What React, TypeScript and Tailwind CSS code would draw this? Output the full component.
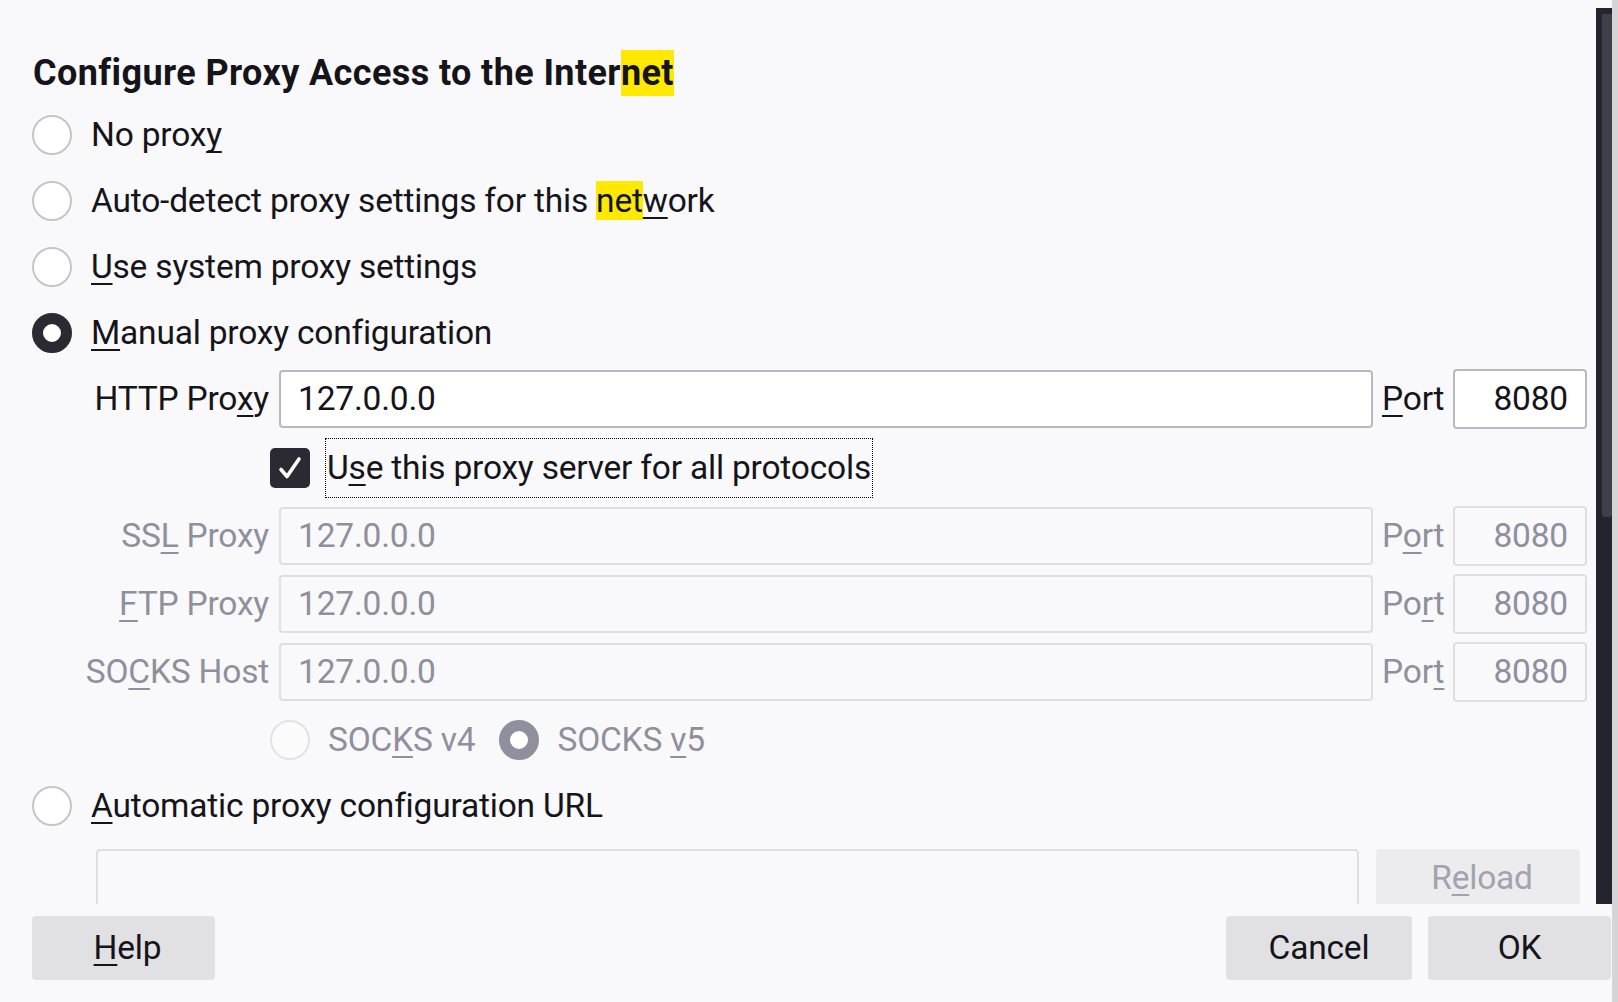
import React from "react";

const font = { fontFamily: "Roboto, 'Noto Sans', sans-serif" };

function Key({ children }: { children: React.ReactNode }) {
  return (
    <span className="underline decoration-[2px] underline-offset-[5px] [text-decoration-skip-ink:none]">
      {children}
    </span>
  );
}

function Radio({ checked, disabled }: { checked?: boolean; disabled?: boolean }) {
  if (checked) {
    return (
      <span
        className={`box-border block h-[40px] w-[40px] shrink-0 rounded-full border-[11px] bg-white ${
          disabled ? "border-[#8f8f9d]" : "border-[#2b2a33]"
        }`}
      />
    );
  }
  return (
    <span
      className={`box-border block h-[40px] w-[40px] shrink-0 rounded-full border-2 ${
        disabled ? "border-[#e3e3e6] bg-[#fbfbfc]" : "border-[#c6c6ca] bg-white"
      }`}
    />
  );
}

function RadioRow({ children, checked }: { children: React.ReactNode; checked?: boolean }) {
  return (
    <div className="flex h-[66px] items-center gap-[19px]">
      <Radio checked={checked} />
      <span className="whitespace-nowrap">{children}</span>
    </div>
  );
}

function ProxyRow({
  label,
  port,
  disabled,
}: {
  label: React.ReactNode;
  port: React.ReactNode;
  disabled?: boolean;
}) {
  const box = disabled
    ? "border-[#dfdfe2] bg-[#f9f9fb] text-[#8f8f9d]"
    : "border-[#b9b9be] bg-white text-[#15141a]";
  return (
    <div className={`flex h-[58px] items-center ${disabled ? "text-[#8f8f9d]" : ""}`}>
      <div className="w-[237px] shrink-0 whitespace-nowrap text-right">{label}</div>
      <div className={`ml-[10px] flex h-[58px] flex-1 items-center rounded-[4px] border-2 pl-[17px] ${box}`}>
        127.0.0.0
      </div>
      <div className="ml-[9px] w-[61px] whitespace-nowrap">{port}</div>
      <div className={`ml-[10px] flex h-[60px] w-[134px] items-center justify-end rounded-[4px] border-2 pr-[17px] ${box}`}>
        8080
      </div>
    </div>
  );
}

export default function App() {
  return (
    <div
      className="flex h-[1002px] w-[1618px] overflow-hidden bg-[#f9f9fb] text-[33.5px] leading-none tracking-[-0.2px] text-[#15141a]"
      style={font}
    >
      <div className="flex min-w-0 flex-1 flex-col">
        {/* scrolling pane */}
        <div className="flex h-[904px] overflow-hidden">
          <div className="min-w-0 flex-1 pl-[32px] pr-[9px] pt-[50px]">
            <div className="flex h-[52px] items-start">
              <h1 className="whitespace-nowrap pl-px text-[36px] font-bold leading-[46px] tracking-[0.4px]">
                Configure Proxy Access to the Inter
                <span className="inline-block bg-[#ffe900]">net</span>
              </h1>
            </div>

            <RadioRow>
              No prox<Key>y</Key>
            </RadioRow>
            <RadioRow>
              Auto-detect proxy settings for this <span className="bg-[#ffe900]">net</span>
              <Key>w</Key>ork
            </RadioRow>
            <RadioRow>
              <Key>U</Key>se system proxy settings
            </RadioRow>
            <RadioRow checked>
              <Key>M</Key>anual proxy configuration
            </RadioRow>

            <div className="mt-[4px]">
              <ProxyRow
                label={
                  <>
                    HTTP Pro<Key>x</Key>y
                  </>
                }
                port={
                  <>
                    <Key>P</Key>ort
                  </>
                }
              />
            </div>

            <div className="mt-[10px] flex h-[60px] items-center pl-[238px]">
              <span className="flex h-[40px] w-[40px] items-center justify-center rounded-[5px] bg-[#2b2a33]">
                <svg width="30" height="30" viewBox="0 0 30 30" fill="none">
                  <path d="M6 16.5 L12 23.5 L24 6" stroke="white" strokeWidth="3.6" strokeLinecap="round" strokeLinejoin="round" />
                </svg>
              </span>
              <span className="ml-[15px] flex h-[60px] items-center border border-dotted border-black px-px whitespace-nowrap">
                U<Key>s</Key>e this proxy server for all protocols
              </span>
            </div>

            <div className="mt-[9px] flex flex-col gap-[10px]">
              <ProxyRow
                disabled
                label={
                  <>
                    SS<Key>L</Key> Proxy
                  </>
                }
                port={
                  <>
                    P<Key>o</Key>rt
                  </>
                }
              />
              <ProxyRow
                disabled
                label={
                  <>
                    <Key>F</Key>TP Proxy
                  </>
                }
                port={
                  <>
                    Po<Key>r</Key>t
                  </>
                }
              />
              <ProxyRow
                disabled
                label={
                  <>
                    SO<Key>C</Key>KS Host
                  </>
                }
                port={
                  <>
                    Por<Key>t</Key>
                  </>
                }
              />
            </div>

            <div className="mt-[10px] flex h-[58px] items-center pl-[238px] text-[#8f8f9d]">
              <Radio disabled />
              <span className="ml-[18px] whitespace-nowrap">
                SOC<Key>K</Key>S v4
              </span>
              <span className="ml-[24px]">
                <Radio checked disabled />
              </span>
              <span className="ml-[18px] whitespace-nowrap">
                SOCKS <Key>v</Key>5
              </span>
            </div>

            <div className="mt-[4px]">
              <RadioRow>
                <Key>A</Key>utomatic proxy configuration URL
              </RadioRow>
            </div>

            <div className="mt-[10px] flex items-start pl-[64px] pr-[7px]">
              <div className="h-[58px] flex-1 rounded-[4px] border-2 border-[#dfdfe2] bg-[#f9f9fb]" />
              <div className="ml-[17px] flex h-[58px] w-[204px] items-center justify-center rounded-[4px] bg-[#ececef] pl-[8px] text-[#a3a3ad]">
                R<Key>e</Key>load
              </div>
            </div>
          </div>

          {/* scrollbar */}
          <div className="w-[16px] pt-[8px]">
            <div className="h-full bg-[#23252e] pl-[6px] pt-[6px]">
              <div className="h-[503px] rounded-b-[3px] bg-[#3d4049]" />
            </div>
          </div>
        </div>

        {/* dialog buttons */}
        <div className="flex items-start justify-between pl-[32px] pr-px pt-[12px]">
          <button className="flex h-[64px] w-[183px] items-center justify-center rounded-[4px] bg-[#e1e1e4] pl-[8px]">
            <Key>H</Key>elp
          </button>
          <div className="flex gap-[16px]">
            <button className="flex h-[64px] w-[186px] items-center justify-center rounded-[4px] bg-[#e1e1e4]">
              Cancel
            </button>
            <button className="flex h-[64px] w-[183px] items-center justify-center rounded-[4px] bg-[#e1e1e4]">
              OK
            </button>
          </div>
        </div>
      </div>

      {/* window edge */}
      <div className="w-[6px] bg-[#d4d4d6]" />
    </div>
  );
}
